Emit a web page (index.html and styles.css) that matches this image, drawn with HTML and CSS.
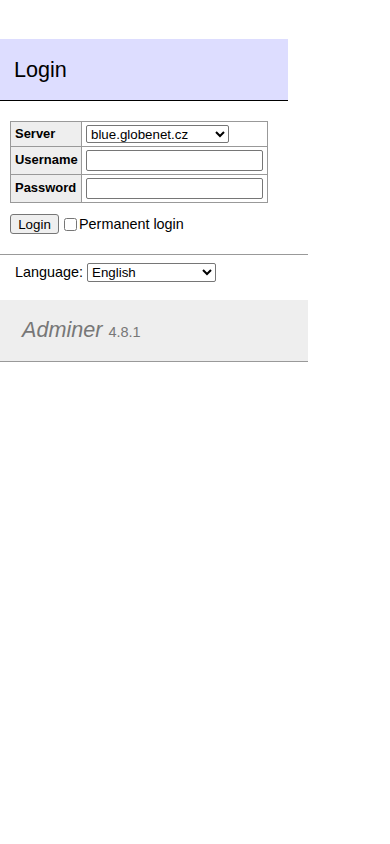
FILE: index.html
```html
<!DOCTYPE html>
<html lang="en">
<head>
<meta charset="utf-8">
<title>Login - Adminer</title>
<link rel="stylesheet" href="styles.css">
</head>
<body>
<div class="page">
  <div class="content">
    <h2 class="title">Login</h2>
    <form class="login-form">
      <table class="login-table">
        <tr>
          <th>Server</th>
          <td>
            <select class="server-select">
              <option>blue.globenet.cz</option>
            </select>
          </td>
        </tr>
        <tr>
          <th>Username</th>
          <td><input class="text-input" type="text"></td>
        </tr>
        <tr>
          <th>Password</th>
          <td><input class="text-input" type="password"></td>
        </tr>
      </table>
      <p class="actions">
        <input class="login-btn" type="submit" value="Login">
        <label class="perm"><input class="perm-check" type="checkbox">Permanent login</label>
      </p>
    </form>
  </div>
  <div class="lang">
    Language: <select class="lang-select"><option>English</option></select>
  </div>
  <div class="menu">
    <h1 class="brand"><a class="brand-link" href="#">Adminer</a> <span class="version">4.8.1</span></h1>
  </div>
</div>
</body>
</html>
```

FILE: styles.css
```css
html, body {
  margin: 0;
  padding: 0;
  background: #fff;
}
body {
  color: #000;
  font: 14.4px/1.25 "Liberation Sans", Arial, sans-serif;
}
.page {
  width: 308px;
  padding-top: 29px;
}
.content {
  margin-left: 10px;
  padding: 10px 20px 20px 0;
}
.title {
  font-size: 21.6px;
  line-height: 27px;
  font-weight: normal;
  margin: 0 0 20px -10px;
  padding: 17px 14px 17px;
  background: #ddf;
  border-bottom: 1px solid #000;
}
.login-form {
  margin: 0;
}
.login-table {
  border-collapse: collapse;
  font-size: 12.96px;
  width: 258px;
}
.login-table th,
.login-table td {
  border: 1px solid #999;
  padding: 3px 4px;
}
.login-table th {
  background: #eee;
  text-align: left;
  font-weight: bold;
  width: 63px;
  padding-right: 3px;
}
.server-select {
  font: 13.33px "Liberation Sans", Arial, sans-serif;
  width: 143px;
  height: 18px;
  margin: 0;
  padding: 0;
  border: 1px solid #767676;
  border-radius: 2px;
  background: #fff;
  display: block;
}
.text-input {
  font: 13.33px "Liberation Sans", Arial, sans-serif;
  width: 177px;
  height: 21px;
  box-sizing: border-box;
  margin: 0;
  padding: 1px 2px;
  border: 1px solid #767676;
  border-radius: 2px;
  display: block;
}
.actions {
  margin: 11px 0 0;
  display: flex;
  align-items: center;
  line-height: 20px;
}
.login-btn {
  font: 13.33px "Liberation Sans", Arial, sans-serif;
  height: 20px;
  width: 49px;
  padding: 0;
  margin: 0;
  border: 1px solid #767676;
  border-radius: 3px;
  background: #efefef;
  color: #000;
}
.perm {
  display: flex;
  align-items: center;
}
.perm-check {
  width: 13px;
  height: 13px;
  margin: 0 2px 0 5px;
}
.lang {
  border-top: 1px solid #999;
  padding: 4px 15px 4px;
  line-height: 26px;
  display: flex;
  align-items: center;
  gap: 4px;
}
.lang-select {
  font: 13.33px "Liberation Sans", Arial, sans-serif;
  width: 129px;
  height: 19px;
  margin: 0;
  padding: 0;
  border: 1px solid #767676;
  border-radius: 2px;
  background: #fff;
}
.menu {
  margin-top: 11px;
}
.brand {
  font-size: 21.6px;
  line-height: 27px;
  font-weight: normal;
  font-style: italic;
  margin: 0;
  padding: 16px 22px 15px;
  background: #eee;
  border-bottom: 1px solid #999;
}
.brand-link {
  color: #777;
  text-decoration: none;
}
.version {
  color: #777;
  font-size: 14.5px;
  font-style: normal;
}
```
